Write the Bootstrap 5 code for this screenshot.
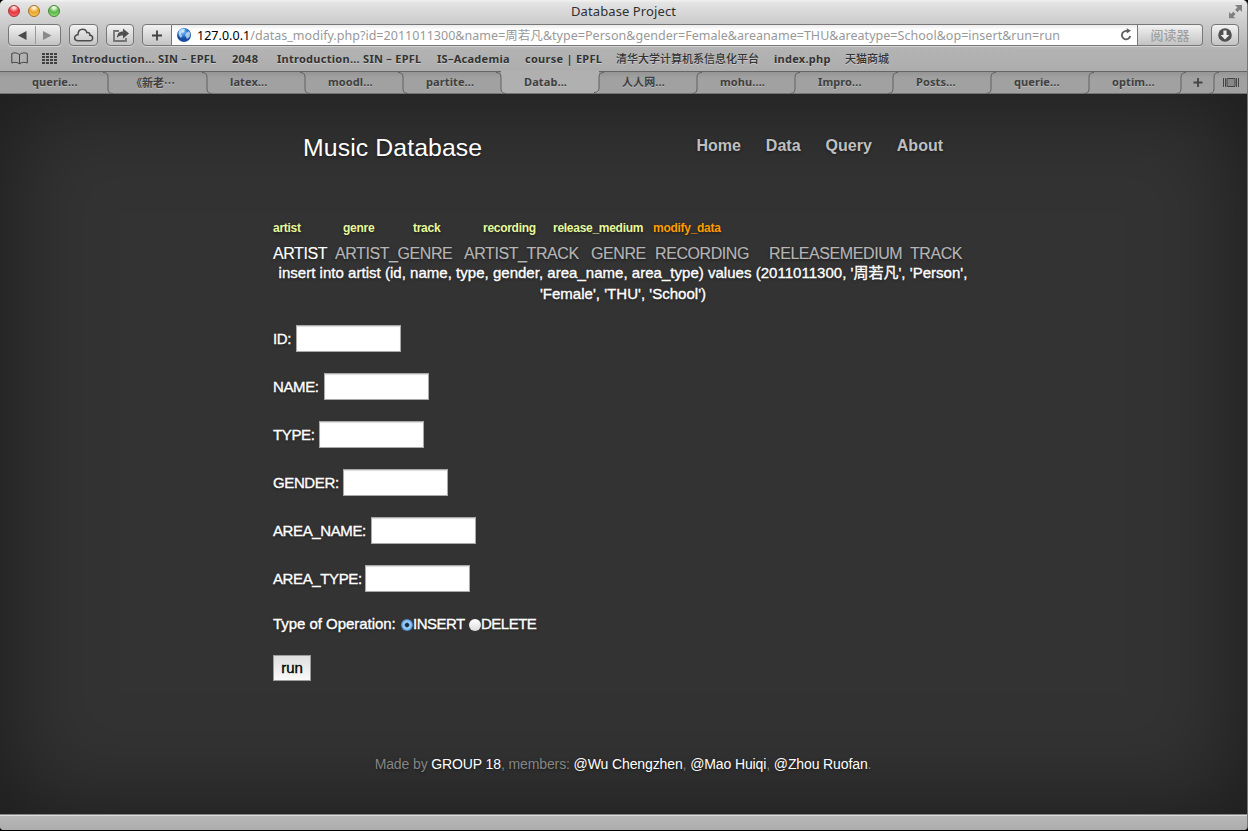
<!DOCTYPE html>
<html lang="en">
<head>
<meta charset="utf-8">
<title>Database Project</title>
<link href="https://cdn.jsdelivr.net/npm/bootstrap@5.3.0/dist/css/bootstrap.min.css" rel="stylesheet">
<style>
html{background:#000}
body{width:1248px;height:831px;overflow:hidden;background:#000;font-family:"Liberation Sans","Noto Sans CJK SC",sans-serif}
.window{width:1247px;height:830px;border-radius:5px 5px 4px 4px;overflow:hidden;background:#b0b0b0;box-shadow:1px 0 0 #777}
.chrome{height:71px;background:linear-gradient(#f2f2f2 0,#e3e3e3 3px,#cbcbcb 24px,#b3b3b3 50px,#adadad 71px);font-family:"Noto Sans","Noto Sans CJK SC",sans-serif;color:#333}
.titlebar{height:23px;font-size:13px;line-height:23px;padding-left:8px}
.title-text{letter-spacing:.1px;color:#303030}
.lamp{width:12px;height:12px;border-radius:50%;margin-top:-1px}
.lamp-r{background:radial-gradient(circle at 50% 15%,#fff 0,#f8b0b0 20%,#e5383d 50%,#f77 100%);border:1px solid #a4343a}
.lamp-y{background:radial-gradient(circle at 50% 15%,#fff 0,#fbe0a0 20%,#e9a52b 50%,#fdd964 100%);border:1px solid #a5702b}
.lamp-g{background:radial-gradient(circle at 50% 15%,#fff 0,#c6ecb4 20%,#58b54a 50%,#a6ed7d 100%);border:1px solid #45843a}
.toolbar{height:25px;padding:1px 8px 0}
.tbtn{height:22px;border:1px solid #777;border-radius:4px;background:linear-gradient(#f2f2f2,#c3c3c3);box-shadow:0 1px 0 #d4d4d4}
.address{height:22px;width:966px;border:1px solid #777;border-left:0;background:linear-gradient(#ececec,#fff 5px);font-size:12.5px;line-height:21px;letter-spacing:.03px;color:#999;white-space:nowrap;box-shadow:0 1px 0 #d4d4d4}
.bookmarks{height:23px;padding-left:11px;font-size:11px;font-weight:700;line-height:21px;letter-spacing:.27px;text-shadow:0 1px 0 #ccc}
.marks{display:grid;grid-template-columns:160px 45px 160px 88px 91px 158px 71px 60px;white-space:nowrap;color:#333}
.cjk{font-weight:500;font-family:"Noto Sans CJK SC",sans-serif;letter-spacing:0}
.tabs{height:23px;display:grid;grid-template-columns:108px 99px repeat(9,98px) 92px 33px 33px;border-top:1px solid #666;border-bottom:1px solid #747474;background:#9e9e9e;font-family:"Noto Sans","Noto Sans CJK SC",sans-serif;font-size:11px;font-weight:700;line-height:20px;letter-spacing:.1px;color:#404040;text-shadow:0 1px 0 #bbb;white-space:nowrap}
.tab{padding-left:23px;position:relative;background:linear-gradient(#959595,#a1a1a1 6px)}
.tab.current{background:#b0b0b0;margin-top:-1px;padding-top:1px}
.edge{position:absolute;right:-5px;top:0;width:10px;height:22px;fill:none;stroke:#606060;z-index:2}
.site{height:720px;background:#333;color:#fff;box-shadow:inset 0 0 100px rgba(0,0,0,.5);text-shadow:0 1px 3px rgba(0,0,0,.5);padding-top:38px}
.content-col{width:700px;margin-left:273px}
.masthead{height:87px;padding:0 30px}
.brand{font-size:24.8px;line-height:32px;letter-spacing:.1px}
.topnav{font-size:16px;font-weight:700;line-height:27px;color:#bfbfbf;gap:25px}
.small-links{display:grid;grid-template-columns:repeat(4,70px) 100px 100px;font-size:12px;font-weight:700;line-height:18px;letter-spacing:-.28px;color:#e8f99b}
.tables{display:grid;grid-template-columns:62px 129px 127px 64px 114px 141px 63px;font-size:16px;line-height:24px;letter-spacing:-.42px;color:#b5b5b5;margin-top:5px;white-space:nowrap;-webkit-text-stroke:.15px currentColor}
.bodytext{font-size:15px;line-height:21px;-webkit-text-stroke:.35px currentColor}
.sql{letter-spacing:.025px;margin-top:-4px;white-space:nowrap}
.field-row{height:27px;margin-bottom:21px;letter-spacing:-.38px;line-height:27px}
.field-row input{width:105px;height:27px;border:1px solid #aaa;background:#fff;box-shadow:inset 0 1px 1px #ddd;padding:0;border-radius:0}
.w1{width:23px}.w2{width:51px}.w3{width:46px}.w4{width:70px}.w5{width:98px}.w6{width:92px}
.dot{width:12px;height:12px;border-radius:50%;background:linear-gradient(#fff,#ddd);margin-top:2px}
.dot.on{background:radial-gradient(circle,#102b4d 0 1.5px,#a5d6fa 3px,#7db8ee 4.5px,#4a78b8 6px)}
.runbtn{width:38px;height:26px;border:1px solid #9c9c9c;background:linear-gradient(#dedede,#fafafa);color:#000;font-size:15px;line-height:24px;padding:0;border-radius:0;text-shadow:none}
.credits{font-size:14px;color:#858585;letter-spacing:-.115px;line-height:20px;margin-top:73px;white-space:nowrap}
.bottombar{height:16px;background:linear-gradient(#b9b9b9,#acacac);border-top:1px solid #888;box-shadow:inset 0 1px 0 #ddd}
</style>
</head>
<body>
<div class="window">
  <header class="chrome">
    <div class="titlebar d-flex align-items-center position-relative">
      <div class="d-flex gap-2" ><span class="lamp lamp-r"></span><span class="lamp lamp-y"></span><span class="lamp lamp-g"></span></div>
      <div class="position-absolute start-0 end-0 text-center title-text">Database Project</div>
      <svg class="ms-auto me-1" width="15" height="15" fill="#808080"><path d="M7 1h7v7l-2.200-2.200-2.300 2.400-2.400-2.400 2.300-2.400zM1 8l2 2 2.300-2.300 2.300 2.300L5.300 12.300l2 2H1z"/></svg>
    </div>
    <div class="toolbar d-flex">
      <div class="tbtn d-flex align-items-center" style="width:53px">
        <svg width="51" height="20"><path d="M17.500 6v9L9 10.500z" fill="#4a4a4a"/><path d="M26.500 1v18" stroke="#9a9a9a"/><path d="M34 6v9l8.500-4.500z" fill="#8a8a8a"/></svg>
      </div>
      <div class="tbtn" style="width:29px;margin-left:8px">
        <svg class="d-block" width="27" height="20" fill="none" stroke="#4c4c4c" stroke-width="1.500"><path d="M8 15.700C3.500 15.700 3.500 9.700 8 9.800C8 6 10 4.200 12.600 4.200C15.500 4.200 16.500 6 16.800 7.600C19.500 7.200 20.200 9 19.800 10.300C23.600 10.500 23.500 15.700 20 15.700Z"/></svg>
      </div>
      <div class="tbtn" style="width:28px;margin-left:8px">
        <svg class="d-block" width="26" height="20"><path d="M12 6H7v10h12v-3" fill="none" stroke="#747474" stroke-width="1.800"/><path d="M10 13c0-4.500 2-6.500 6-6.500V3.500l6 5-6 5v-3c-3 0-4.500.5-6 2.500z" fill="#505050"/></svg>
      </div>
      <div class="tbtn rounded-end-0" style="width:30px;margin-left:8px">
        <svg class="d-block" width="28" height="20"><path d="M14 5.500v10M9 10.500h10" stroke="#404040" stroke-width="1.800"/></svg>
      </div>
      <div class="address d-flex">
        <svg class="flex-shrink-0" width="25" height="20"><defs><radialGradient id="g" cx=".4" cy=".25"><stop stop-color="#b4dcff"/><stop offset=".5" stop-color="#428ddd"/><stop offset="1" stop-color="#184e9f"/></radialGradient></defs><circle cx="12" cy="10" r="7" fill="url(#g)"/><path d="M7 6c2-2 4-2.500 6-1.500l-1 2.500-3 1 1 3-1 2C7 11 6 9 7 6zM14 8l3-2c1.500 2 1.500 4 .5 6l-2.500 2-2-4z" fill="#d2edfb" opacity=".75"/></svg>
        <span class="url"><span class="text-black">127.0.0.1</span><span class="path">/datas_modify.php?id=2011011300&amp;name=周若凡&amp;type=Person&amp;gender=Female&amp;areaname=THU&amp;areatype=School&amp;op=insert&amp;run=run</span></span>
        <svg class="ms-auto flex-shrink-0" style="margin-right:3px" width="16" height="20"><path d="M10.500 6.700A4.200 4.200 0 1 0 12.200 11" fill="none" stroke="#606060" stroke-width="1.800"/><path d="M8.500 4V9.500H13V4.500z" fill="#606060" transform="translate(0 -1)" clip-path="polygon(0 0,100% 50%,0 100%)"/></svg>
      </div>
      <div class="tbtn rounded-start-0 border-start-0 text-center cjk" style="width:65px;font-size:13px;line-height:19px;color:#a0a0a0">阅读器</div>
      <div class="tbtn" style="width:28px;margin-left:8px">
        <svg class="d-block" width="26" height="20"><circle cx="13" cy="10" r="6.800" fill="#505050"/><path d="M11.400 5.500h3.200V10h2.800L13 14.500 8.600 10h2.800z" fill="#eee"/></svg>
      </div>
    </div>
    <nav class="bookmarks d-flex">
      <svg width="61" height="23" fill="none" stroke="#424242"><path d="M8.500 6.500C6 4.500 3 4.500.8 5.500V15c2.500-1 5.500-1 7.700.8C11 14 13.500 14 16.300 15V5.500C14 4.500 11 4.500 8.500 6.500V16"/><g stroke="none" fill="#404040"><path d="M31 5h3v2h-3zm4 0h3v2h-3zm4 0h3v2h-3zm4 0h3v2h-3zM31 8h3v2h-3zm4 0h3v2h-3zm4 0h3v2h-3zm4 0h3v2h-3zM31 11h3v2h-3zm4 0h3v2h-3zm4 0h3v2h-3zm4 0h3v2h-3zM31 14h3v2h-3zm4 0h3v2h-3zm4 0h3v2h-3zm4 0h3v2h-3z"/></g></svg>
      <div class="marks"><span>Introduction... SIN – EPFL</span><span>2048</span><span>Introduction... SIN – EPFL</span><span>IS–Academia</span><span>course | EPFL</span><span class="cjk">清华大学计算机系信息化平台</span><span>index.php</span><span class="cjk">天猫商城</span></div>
    </nav>
  </header>
  <nav class="tabs">
    <div class="tab" style="padding-left:32px">querie...<svg class="edge"><path d="M0 .5Q5 .5 5 5V17Q5 21.500 10 21.500"/></svg></div>
    <div class="tab cjk" style="padding-left:23px;font-weight:700">《新老…<svg class="edge"><path d="M0 .5Q5 .5 5 5V17Q5 21.500 10 21.500"/></svg></div>
    <div class="tab">latex...<svg class="edge"><path d="M0 .5Q5 .5 5 5V17Q5 21.500 10 21.500"/></svg></div>
    <div class="tab">moodl...<svg class="edge"><path d="M0 .5Q5 .5 5 5V17Q5 21.500 10 21.500"/></svg></div>
    <div class="tab">partite...<svg class="edge"><path d="M0 .5Q5 .5 5 5V17Q5 21.500 10 21.500"/></svg></div>
    <div class="tab current">Datab...<svg class="edge"><path d="M10 1.500Q5 1.500 5 6V17Q5 21.500 0 21.500"/></svg></div>
    <div class="tab">人人网...<svg class="edge"><path d="M10 .5Q5 .5 5 5V17Q5 21.500 0 21.500"/></svg></div>
    <div class="tab">mohu....<svg class="edge"><path d="M10 .5Q5 .5 5 5V17Q5 21.500 0 21.500"/></svg></div>
    <div class="tab">Impro...<svg class="edge"><path d="M10 .5Q5 .5 5 5V17Q5 21.500 0 21.500"/></svg></div>
    <div class="tab">Posts...<svg class="edge"><path d="M10 .5Q5 .5 5 5V17Q5 21.500 0 21.500"/></svg></div>
    <div class="tab">querie...<svg class="edge"><path d="M10 .5Q5 .5 5 5V17Q5 21.500 0 21.500"/></svg></div>
    <div class="tab">optim...<svg class="edge"><path d="M10 .5Q5 .5 5 5V17Q5 21.500 0 21.500"/></svg></div>
    <div class="tab p-0"><svg class="d-block" width="33" height="21"><path d="M17 6v9M12.500 10.500h9" stroke="#444" stroke-width="1.800"/></svg><svg class="edge"><path d="M10 .5Q5 .5 5 5V17Q5 21.500 0 21.500"/></svg></div>
    <div class="tab p-0"><svg class="d-block" width="33" height="21"><path d="M9.500 6v9M11.500 6v9M22.500 6v9M24.500 6v9" stroke="#444"/><path d="M13 6.500h8v8h-8z" fill="#888" stroke="#444"/></svg></div>
  </nav>
  <main class="site">
    <div class="content-col">
      <div class="masthead d-flex justify-content-between"><div class="brand">Music Database</div><nav class="topnav d-flex"><span>Home</span><span>Data</span><span>Query</span><span>About</span></nav></div>
      <div class="small-links"><span>artist</span><span>genre</span><span>track</span><span>recording</span><span>release_medium</span><span style="color:#ff9c00">modify_data</span></div>
      <div class="tables"><span class="text-white">ARTIST</span><span>ARTIST_GENRE</span><span>ARTIST_TRACK</span><span>GENRE</span><span>RECORDING</span><span>RELEASEMEDIUM</span><span>TRACK</span></div>
      <div class="bodytext">
        <div class="sql text-center">insert into artist (id, name, type, gender, area_name, area_type) values (2011011300, '周若凡', 'Person',<br>'Female', 'THU', 'School')</div>
        <form style="padding-top:21px">
          <div class="field-row d-flex"><label class="w1">ID:</label><input type="text"></div>
          <div class="field-row d-flex"><label class="w2">NAME:</label><input type="text"></div>
          <div class="field-row d-flex"><label class="w3">TYPE:</label><input type="text"></div>
          <div class="field-row d-flex"><label class="w4">GENDER:</label><input type="text"></div>
          <div class="field-row d-flex"><label class="w5">AREA_NAME:</label><input type="text"></div>
          <div class="field-row d-flex"><label class="w6">AREA_TYPE:</label><input type="text"></div>
          <div class="ops d-flex align-items-center"><span style="width:128px;letter-spacing:-.04px">Type of Operation:</span><span class="dot on"></span><span style="width:56px;letter-spacing:-.5px">INSERT</span><span class="dot"></span><span style="letter-spacing:-.5px">DELETE</span></div>
          <button type="button" class="runbtn d-block" style="margin-top:21px">run</button>
        </form>
      </div>
      <footer class="credits text-center">Made by <span class="text-white">GROUP 18</span>, members: <span class="text-white">@Wu Chengzhen</span>, <span class="text-white">@Mao Huiqi</span>, <span class="text-white">@Zhou Ruofan</span>.</footer>
    </div>
  </main>
  <div class="bottombar"></div>
</div>
<script src="https://cdn.jsdelivr.net/npm/bootstrap@5.3.0/dist/js/bootstrap.bundle.min.js"></script>
</body>
</html>
